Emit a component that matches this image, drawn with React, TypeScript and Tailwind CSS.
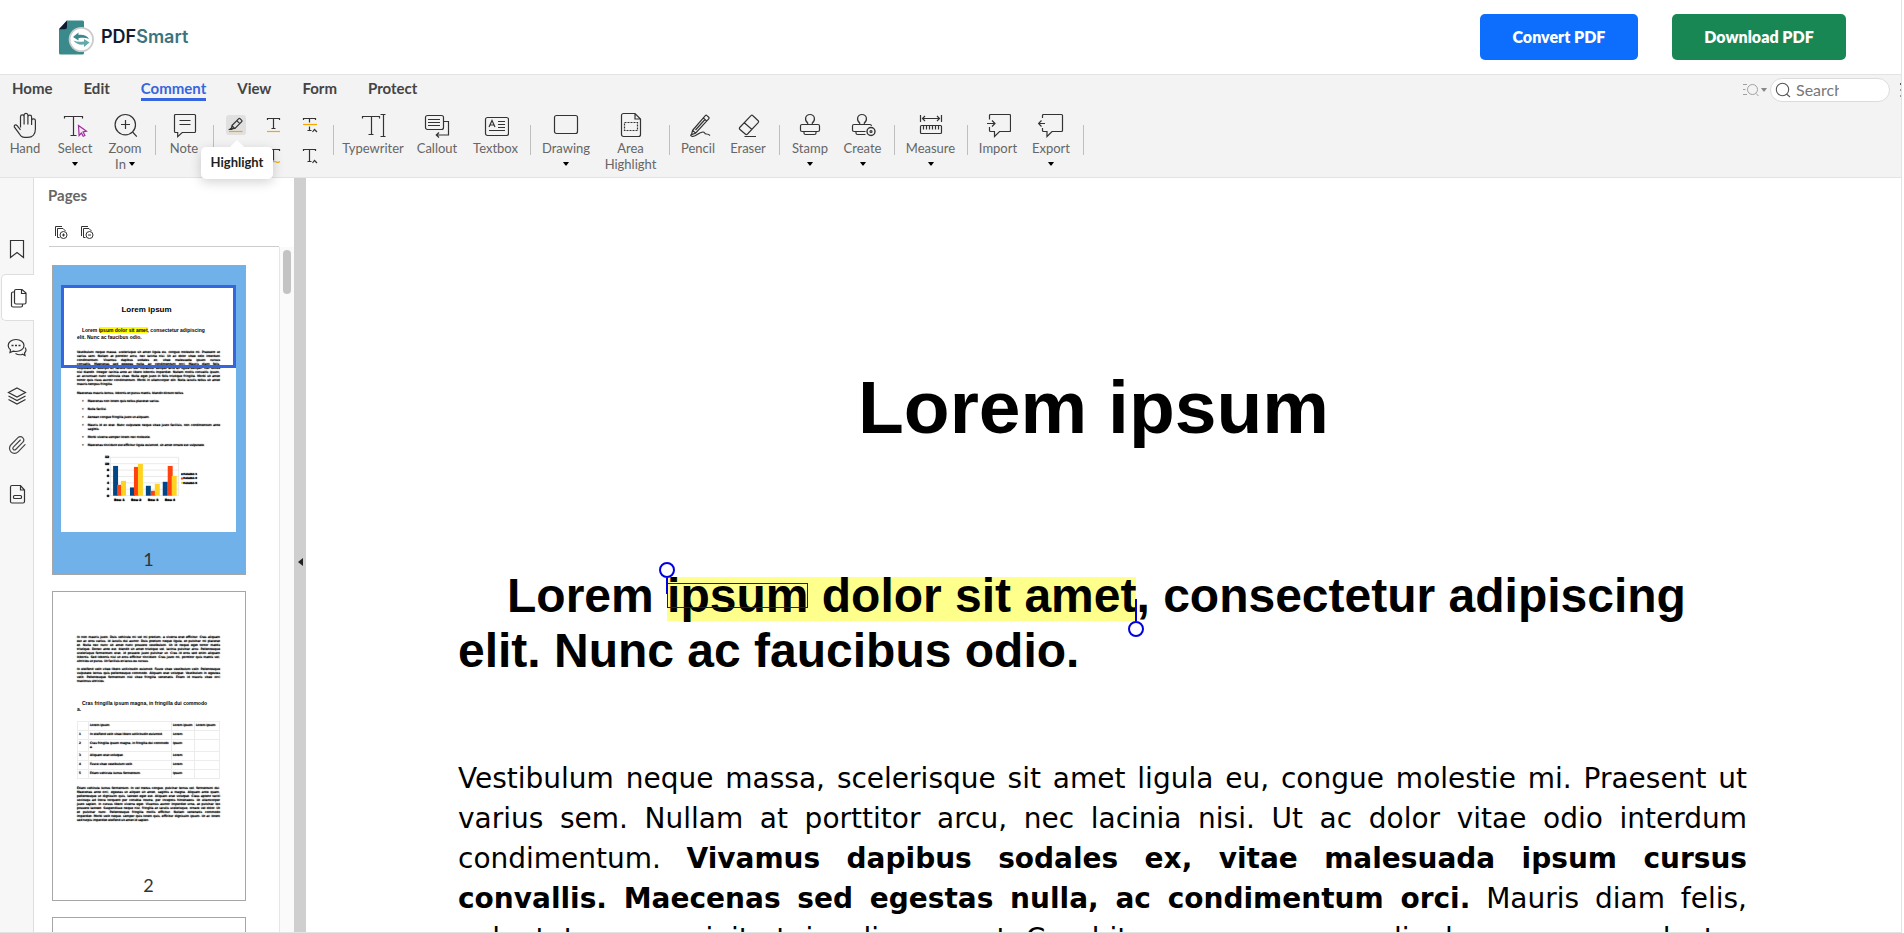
import type { ReactNode } from "react";
import { Paperclip } from "lucide-react";

const BODY = "Vestibulum neque massa, scelerisque sit amet ligula eu, congue molestie mi. Praesent ut varius sem. Nullam at porttitor arcu, nec lacinia nisi. Ut ac dolor vitae odio interdum condimentum. ";
const BODY_BOLD = "Vivamus dapibus sodales ex, vitae malesuada ipsum cursus convallis. Maecenas sed egestas nulla, ac condimentum orci.";
const BODY_END = " Mauris diam felis, vulputate ac suscipit et, iaculis non est. Curabitur semper arcu ac ligula semper, nec luctus nisl blandit. Integer lacinia ante ac libero lobortis imperdiet.";

const THUMB_BODY = [
  "Vestibulum neque massa, scelerisque sit amet ligula eu, congue molestie mi. Praesent ut",
  "varius sem. Nullam at porttitor arcu, nec lacinia nisi. Ut ac dolor vitae odio interdum",
  "condimentum. Vivamus dapibus sodales ex, vitae malesuada ipsum cursus",
  "convallis. Maecenas sed egestas nulla, ac condimentum orci. Mauris diam felis,",
  "vulputate ac suscipit et, iaculis non est. Curabitur semper arcu ac ligula semper, nec luctus",
  "nisl blandit. Integer lacinia ante ac libero lobortis imperdiet. Nullam mollis convallis ipsum,",
  "ac accumsan nunc vehicula vitae. Nulla eget justo in felis tristique fringilla. Morbi sit amet",
  "tortor quis risus auctor condimentum. Morbi in ullamcorper elit. Nulla iaculis tellus sit amet",
  "mauris tempus fringilla.",
];

const BULLETS = [
  ["Maecenas non lorem quis tellus placerat varius."],
  ["Nulla facilisi."],
  ["Aenean congue fringilla justo ut aliquam."],
  ["Mauris id ex erat. Nunc vulputate neque vitae justo facilisis, non condimentum ante", "sagittis."],
  ["Morbi viverra semper lorem nec molestie."],
  ["Maecenas tincidunt est efficitur ligula euismod, sit amet ornare est vulputate."],
];

const PAGE2_A = [
  "In non mauris justo. Duis vehicula mi vel mi pretium, a viverra erat efficitur. Cras aliquam",
  "est ac eros varius, id iaculis dui auctor. Duis pretium neque ligula, et pulvinar mi placerat",
  "et. Nulla nec nunc sit amet nunc posuere vestibulum. Ut id neque eget tortor mattis",
  "tristique. Donec ante est, blandit sit amet tristique vel, lacinia pulvinar arcu. Pellentesque",
  "scelerisque fermentum erat, id posuere justo pulvinar ut. Cras id eros sed enim aliquam",
  "lobortis. Sed lobortis nisl ut eros efficitur tincidunt. Cras justo mi, porttitor quis mattis vel,",
  "ultricies ut purus. Ut facilisis et lacus eu cursus.",
];
const PAGE2_B = [
  "In eleifend velit vitae libero sollicitudin euismod. Fusce vitae vestibulum velit. Pellentesque",
  "vulputate lectus quis pellentesque commodo. Aliquam erat volutpat. Vestibulum in egestas",
  "velit. Pellentesque fermentum nisl vitae fringilla venenatis. Etiam id mauris vitae orci",
  "maximus ultricies.",
];
const PAGE2_C = [
  "Etiam vehicula luctus fermentum. In vel metus congue, pulvinar lectus vel, fermentum dui.",
  "Maecenas ante orci, egestas ut aliquet sit amet, sagittis a magna. Aliquam ante quam,",
  "pellentesque ut dignissim quis, laoreet eget est. Aliquam erat volutpat. Class aptent taciti",
  "sociosqu ad litora torquent per conubia nostra, per inceptos himenaeos. Ut ullamcorper",
  "justo sapien, in cursus libero viverra eget. Vivamus auctor imperdiet urna, at pulvinar leo",
  "posuere laoreet. Suspendisse neque nisl, fringilla at iaculis scelerisque, ornare vel dolor. Ut",
  "et pulvinar nunc. Pellentesque fringilla mollis efficitur. Nullam venenatis commodo",
  "imperdiet. Morbi velit neque, semper quis lorem quis, efficitur dignissim ipsum. Ut ac lorem",
  "sed turpis imperdiet eleifend sit amet id sapien.",
];
const TABLE_ROWS = [
  ["", "Lorem ipsum", "Lorem ipsum", "Lorem ipsum"],
  ["1", "In eleifend velit vitae libero sollicitudin euismod.", "Lorem", ""],
  ["2", "Cras fringilla ipsum magna, in fringilla dui commodo a.", "Ipsum", ""],
  ["3", "Aliquam erat volutpat.", "Lorem", ""],
  ["4", "Fusce vitae vestibulum velit.", "Lorem", ""],
  ["5", "Etiam vehicula luctus fermentum.", "Ipsum", ""],
];

function Icon({ children, size = 26 }: { children: ReactNode; size?: number }) {
  return (
    <svg width={size} height={size} viewBox={`0 0 ${size} ${size}`} fill="none" stroke="#333" strokeWidth="1.2" aria-hidden="true" className="shrink-0">
      {children}
    </svg>
  );
}

function Caret({ className = "fill-black" }: { className?: string }) {
  return (
    <svg width="6" height="4" viewBox="0 0 6 4" aria-hidden="true" className={className}>
      <path d="M0 0h6L3.5 3.4h-1z" />
    </svg>
  );
}

const icons = {
  hand: (
    <Icon>
      <path d="M8.5 15.5V4.7a1.8 1.8 0 0 1 3.6 0V12.5M12.1 5V3.2a1.9 1.9 0 0 1 3.8 0v9.3M15.9 5a1.8 1.8 0 0 1 3.7 0v8M19.6 8.8a1.9 1.9 0 0 1 3.8 0V17c0 5-2.8 8.4-7.6 8.4h-3.2c-2.4 0-4-1.2-5.2-3.6L2.3 14.9c-.4-1.5 1.3-3 2.8-1.3l3.4 4.2" />
    </Icon>
  ),
  select: (
    <Icon>
      <path d="M2.5 6.5v-2h18v2M11.5 4.5v19M8.5 23.5h6" />
      <path d="M16.5 13.5l8 5.7-3.4.8 1.8 3.4-1.7.9-1.8-3.3-2.3 2.5z" fill="#fbe6fb" stroke="#9c2f9c" />
    </Icon>
  ),
  zoom: (
    <Icon>
      <circle cx="13.3" cy="12.7" r="10.2" />
      <path d="M13.5 8v9M9 12.5h9M20.6 20l4.2 4.6" />
    </Icon>
  ),
  note: (
    <Icon>
      <path d="M4.5 2.5h19a1 1 0 0 1 1 1v16a1 1 0 0 1-1 1H11.2L6.7 24.6v-4.1H4.5a1 1 0 0 1-1-1v-16a1 1 0 0 1 1-1zM8.5 8.5h11M8.5 12.5h11" />
    </Icon>
  ),
  typewriter: (
    <Icon>
      <path d="M2.5 6.5v-2h17v2M11.5 4.5v18M8.5 22.5h5M20.5 2.5h5M20.5 24.5h5M23.5 2.5v22" />
    </Icon>
  ),
  callout: (
    <Icon>
      <rect x="1.5" y="3.5" width="18" height="14" rx="2" />
      <path d="M4 7.5h12M4 10.5h12M4 13.5h12M19.5 9.5h5v13.5H12.5M15 20.5L12.3 23l2.7 2.5" />
    </Icon>
  ),
  textbox: (
    <Icon>
      <rect x="2.5" y="5.5" width="23" height="18" rx="2" />
      <path d="M6 15l3-6.500 3 6.500M7 13h4M15 9.500h7M15 12.500h7M15 15.500h7M6 18.500h16" />
    </Icon>
  ),
  drawing: (
    <Icon>
      <rect x="1.5" y="3.5" width="23" height="18" rx="2" />
    </Icon>
  ),
  area: (
    <Icon>
      <path d="M5.5 1.5H17L22.5 7v15.500a2 2 0 0 1-2 2h-15a2 2 0 0 1-2-2v-19a2 2 0 0 1 2-2zM17 1.500V7h5.500" />
      <rect x="6.500" y="10.500" width="13" height="8" strokeDasharray="2 1" />
    </Icon>
  ),
  pencil: (
    <Icon>
      <path d="M7.500 18.500L20.300 3.600c.5-.5 1.200-.5 1.700 0l1.700 1.600c.5.500.5 1.100 0 1.600L10.500 21.200l-4 1.300zM18.300 6l3.300 3M7.800 18.300l2.700 2.800M10.500 18L20 7.500" />
      <path d="M6 22.500c-1.200 2 2.500 2.500 5 .8 3-2 4.700-3.300 7-3.300 2 0 1.300 2 3 2 1.500 0 2.300-.2 4 1.500" />
    </Icon>
  ),
  eraser: (
    <Icon>
      <path d="M4.700 15.500L16 3.700c.6-.6 1.300-.6 1.900 0l5.300 5c.6.600.6 1.300 0 2L12.500 22c-.8.800-1.500.8-2.300 0l-5.500-4.700c-.5-.6-.5-1.200 0-1.800zM9.300 10.800l7.700 6.700M9.500 24.500H21" />
    </Icon>
  ),
  stamp: (
    <Icon>
      <path d="M10.700 12.500V11C7 8 8.300 2.500 13 2.500s6 5.500 2.300 8.500v1.500" />
      <rect x="3.500" y="12.500" width="19" height="7" rx="1.500" />
      <path d="M7 19.500v1.500a1.500 1.500 0 0 0 1.500 1.500h9a1.500 1.500 0 0 0 1.500-1.500v-1.500" />
    </Icon>
  ),
  create: (
    <Icon>
      <path d="M9.700 12.500V11C6 8 7.300 2.500 12 2.500s6 5.500 2.300 8.500v1.500M15.500 19.500H4a1.500 1.500 0 0 1-1.500-1.500v-4A1.500 1.500 0 0 1 4 12.500h16c.8 0 1.300.5 1.500 1.500M6 19.500v1.500a1.500 1.500 0 0 0 1.500 1.500h8" />
      <circle cx="21" cy="19.500" r="4" strokeWidth="1.400" />
      <circle cx="21" cy="19.500" r="1" />
    </Icon>
  ),
  measure: (
    <Icon>
      <path d="M2.500 3v7M23.500 3v7M4.500 6.500h17M7 4L4.500 6.500 7 9M19 4l2.500 2.500L19 9" />
      <rect x="2.500" y="13.500" width="21" height="8" rx="1" />
      <path d="M5.500 13.500v4M8.500 13.500v4M11.500 13.500v4M14.500 13.500v4M17.500 13.500v4M20.500 13.500v4" />
    </Icon>
  ),
  import: (
    <Icon>
      <path d="M4.500 7.500v-4a1 1 0 0 1 1-1h19a1 1 0 0 1 1 1v15a1 1 0 0 1-1 1H14.500l-5 5v-5h-4a1 1 0 0 1-1-1V15M2 11.500h7.500M7 8.500l3 3-3 3" />
    </Icon>
  ),
  export: (
    <Icon>
      <path d="M4.500 6V3.500a1 1 0 0 1 1-1h18a1 1 0 0 1 1 1v15a1 1 0 0 1-1 1H14l-5 5v-5H5.500a1 1 0 0 1-1-1V16M.8 11.500H7M3.500 8.500l-3 3 3 3" />
    </Icon>
  ),
};

type ToolDef = { icon: ReactNode; label: string; second?: string; caret?: boolean; width: string } | null;

const TOOLS_LEFT: ToolDef[] = [
  { icon: icons.hand, label: "Hand", width: "w-[50px]" },
  { icon: icons.select, label: "Select", caret: true, width: "w-[50px]" },
  { icon: icons.zoom, label: "Zoom", second: "In", caret: true, width: "w-[50px]" },
  null,
  { icon: icons.note, label: "Note", width: "w-[48px]" },
  null,
];

const TOOLS_RIGHT: ToolDef[] = [
  null,
  { icon: icons.typewriter, label: "Typewriter", width: "w-[70px]" },
  { icon: icons.callout, label: "Callout", width: "w-[58px]" },
  { icon: icons.textbox, label: "Textbox", width: "w-[59px]" },
  null,
  { icon: icons.drawing, label: "Drawing", caret: true, width: "w-[62px]" },
  { icon: icons.area, label: "Area", second: "Highlight", width: "w-[67px]" },
  null,
  { icon: icons.pencil, label: "Pencil", width: "w-[48px]" },
  { icon: icons.eraser, label: "Eraser", width: "w-[52px]" },
  null,
  { icon: icons.stamp, label: "Stamp", caret: true, width: "w-[52px]" },
  { icon: icons.create, label: "Create", caret: true, width: "w-[53px]" },
  null,
  { icon: icons.measure, label: "Measure", caret: true, width: "w-[63px]" },
  null,
  { icon: icons.import, label: "Import", width: "w-[52px]" },
  { icon: icons.export, label: "Export", caret: true, width: "w-[54px]" },
  null,
];

function Tool({ tool }: { tool: ToolDef }) {
  if (!tool) {
    return (
      <div className="flex w-[10px] shrink-0 justify-center pt-[13px]">
        <div className="h-[30px] w-px bg-[#bfbfbf]" />
      </div>
    );
  }
  return (
    <button type="button" className={`flex shrink-0 flex-col items-center text-[13px] leading-4 text-[#666] ${tool.width}`}>
      {tool.icon}
      <span className="mt-[2px] whitespace-nowrap">{tool.label}</span>
      <span className="flex h-4 items-center gap-[3px] whitespace-nowrap">
        {tool.second}
        {tool.caret && <Caret />}
      </span>
    </button>
  );
}

function TextTool({ label, active, children }: { label: string; active?: boolean; children: ReactNode }) {
  return (
    <button type="button" aria-label={label} className={`flex h-5 w-5 items-center justify-center rounded-[3px] ${active ? "bg-[#e0e0e0]" : ""}`}>
      <Icon size={16}>{children}</Icon>
    </button>
  );
}

function TextTools() {
  return (
    <div className="relative mt-[3px] grid w-[110px] shrink-0 grid-cols-3 content-start justify-items-center gap-y-[11px]">
      <TextTool label="Highlight" active>
        <path d="M4 8.500L10.800 1.700c.4-.4.800-.4 1.200 0l1.700 1.700c.4.400.4.800 0 1.200L7 11.400l-2.600.2-.8-.8zM9 3.800l2.800 2.800M4.200 9l2.500 2.500M3.700 10.800L1.500 12.500h3" />
        <path d="M1 14.500h13.500" stroke="#f5a800" />
      </TextTool>
      <TextTool label="Underline">
        <path d="M2.500 3V1.500h12V3M8.500 1.500v10M6.500 11.500h4" />
        <path d="M2 14.500h13" stroke="#f5a800" />
      </TextTool>
      <TextTool label="Replace">
        <path d="M1.500 3V1.500h12V3M7.500 1.500v4M7.500 9.500v4M5.500 13.500h4M10.500 15l2-2.500 2.500 2.500" />
        <path d="M1 7.500h14" stroke="#f5a800" />
      </TextTool>
      <TextTool label="Strikeout">
        <path d="M2.500 3V1.500h12V3M8.500 1.500v12M6.500 13.500h4" />
      </TextTool>
      <TextTool label="Squiggly">
        <path d="M2.500 3V1.500h12V3M8.500 1.500v11" />
        <path d="M2 14.500c2-2 2.500 0 4 0s2-1 3.500-1 2 1 3 1 1-1 2.500-.5" stroke="#f5a800" />
      </TextTool>
      <TextTool label="Insert text">
        <path d="M1.500 3V1.500h12V3M7.500 1.500v12M5.500 13.500h4M10.500 15l2-2.500 2.500 2.500" />
      </TextTool>
      <div role="tooltip" className="absolute -left-[17px] top-[32px] z-20 flex h-8 w-[72px] items-center justify-center rounded-[5px] bg-white text-[13px] font-bold text-[#222] shadow-[0_3px_12px_rgba(0,0,0,0.18)]">
        <span className="absolute -top-[5px] left-[31px] h-[10px] w-[10px] rotate-45 bg-white" />
        <span className="relative">Highlight</span>
      </div>
    </div>
  );
}

function Logo() {
  return (
    <a href="#" className="flex items-center gap-[7px] font-['Inter',sans-serif] text-[18px] font-semibold leading-6">
      <svg width="35" height="35" viewBox="0 0 35 35" aria-hidden="true">
        <path d="M8 .5h15.500a1.500 1.500 0 0 1 1.500 1.500v31a1.500 1.500 0 0 1-1.500 1.500h-22A1.500 1.500 0 0 1 0 33V9z" fill="#3a8a8c" />
        <path d="M0 9.200L8 .5V7a2.200 2.200 0 0 1-2.200 2.200z" fill="#101a30" />
        <circle cx="22.300" cy="19.500" r="11.700" fill="#fff" stroke="#cbcbcb" strokeWidth="1.800" />
        <path d="M14 17l5.500-4.500V15c4.500-.6 8.500.7 10.500 4-3-1.300-6.500-1.600-10.500-.8v2.300z" fill="#3a8a8c" />
        <path d="M30.500 22.500L25 27v-2.400c-4.500.6-8.500-.7-10.500-4 3 1.300 6.500 1.600 10.500.8V19z" fill="#62a9a9" />
      </svg>
      <span className="text-[#101a30]">PDF<span className="text-[#3c747d]">Smart</span></span>
    </a>
  );
}

function TopBar() {
  return (
    <header className="flex h-[74px] shrink-0 items-center justify-between pl-[59px] pr-[55px]">
      <Logo />
      <div className="flex gap-[34px] text-[16px] font-extrabold text-white">
        <button type="button" className="h-[46px] w-[158px] rounded-[5px] bg-[#0d6efd]">Convert PDF</button>
        <button type="button" className="h-[46px] w-[174px] rounded-[5px] bg-[#198754]">Download PDF</button>
      </div>
    </header>
  );
}

function Ribbon() {
  const tabs = ["Home", "Edit", "Comment", "View", "Form", "Protect"];
  return (
    <div className="shrink-0 border-y border-[#e3e3e3] bg-[#f3f3f3]">
      <div className="flex h-[37px] items-start justify-between">
        <nav className="flex gap-[31px] pl-3 pt-[3px] text-[15px] font-bold leading-5 text-[#444]">
          {tabs.map((t) => (
            <a key={t} href="#" className={t === "Comment" ? "border-b-[3px] border-[#3566e0] text-[#3566e0]" : ""}>{t}</a>
          ))}
        </nav>
        <div className="flex items-center pt-[3px]">
          <button type="button" aria-label="Search options" className="flex items-center gap-[2px]">
            <svg width="16" height="14" viewBox="0 0 16 14" fill="none" stroke="#a0a0a0" aria-hidden="true">
              <path d="M0 1.500h4M0 6.500h2.500M0 11.500h4M13 10.500l2.500 2.500" />
              <circle cx="9.500" cy="6.500" r="5" />
            </svg>
            <Caret className="fill-[#888]" />
          </button>
          <label className="ml-[3px] flex h-6 w-[120px] items-center rounded-full border border-[#dcdcdc] bg-white pl-1">
            <svg width="16" height="16" viewBox="0 0 16 16" fill="none" stroke="#555" strokeWidth="1.100" aria-hidden="true">
              <circle cx="7.500" cy="7.500" r="6.200" />
              <path d="M11.500 12l3.500 3" />
            </svg>
            <input aria-label="Search" placeholder="Search" className="ml-[5px] w-[43px] bg-transparent text-[16px] leading-5 outline-none placeholder:text-[#777]" />
          </label>
          <button type="button" aria-label="More" className="ml-[10px] flex w-px flex-col gap-1">
            <span className="h-[2px] bg-[#555]" />
            <span className="h-[2px] bg-[#999]" />
            <span className="h-[2px] bg-[#999]" />
          </button>
        </div>
      </div>
      <div className="flex h-[65px]">
        {TOOLS_LEFT.map((t, i) => <Tool key={i} tool={t} />)}
        <TextTools />
        {TOOLS_RIGHT.map((t, i) => <Tool key={i} tool={t} />)}
      </div>
    </div>
  );
}

const RAIL: { label: string; art: ReactNode }[] = [
  { label: "Bookmarks", art: <path d="M3.500 1.500h13v17l-6.500-5-6.500 5z" /> },
  { label: "Pages", art: <path d="M8 1.500h6L18 5v9.500a1.500 1.500 0 0 1-1.500 1.500H8a1.500 1.500 0 0 1-1.500-1.500V3A1.500 1.500 0 0 1 8 1.500zM13.500 1.500v4H18M6.500 4H5a1.500 1.500 0 0 0-1.500 1.500v12A1.500 1.500 0 0 0 5 19h8a1.500 1.500 0 0 0 1.500-1.500V16" /> },
  { label: "Comments", art: <><path d="M9 2.500c4.500 0 8 2.500 8 6s-3.500 6-8 6c-1 0-2-.1-2.800-.4L3 15.500l.5-2.700C2 11.700 1.200 10.200 1.200 8.500c0-3.500 3.300-6 7.800-6zM8.500 16.500c2.500 1.500 5 1.500 7 .7l2.500 1.300-.5-2.500c1.700-1.700 1.700-4 .5-5.500" /><path d="M4.500 8.500h2M8 8.500h2M11.500 8.500h2" strokeWidth="1.500" /></> },
  { label: "Layers", art: <path d="M10 2l8.500 4.500L10 11 1.500 6.500zM1.500 10l8.500 4.500 8.500-4.500M1.500 13.500L10 18l8.500-4.500" /> },
  { label: "Attachments", art: <Paperclip size={20} strokeWidth={1.4} stroke="#444" /> },
  { label: "Signatures", art: <><path d="M5 1.500h8.500L17.500 6v11.500a1.500 1.500 0 0 1-1.500 1.500H5a1.500 1.500 0 0 1-1.500-1.500V3A1.500 1.500 0 0 1 5 1.500zM13.500 1.500V6h4" /><rect x="6.500" y="11.500" width="8" height="3" rx="1" /></> },
];

function Rail() {
  return (
    <nav className="flex w-[34px] shrink-0 flex-col gap-[2px] border-r border-[#dedede] bg-[#f7f7f7] pt-[47px]">
      {RAIL.map((r) => (
        <button
          key={r.label}
          type="button"
          aria-label={r.label}
          className={`flex h-[47px] items-center justify-center ${r.label === "Pages" ? "-mr-px ml-px rounded-l-[5px] border-y border-l border-[#dedede] bg-white" : "pl-px"}`}
        >
          <Icon size={20}>{r.art}</Icon>
        </button>
      ))}
    </nav>
  );
}

function Lines({ lines }: { lines: string[] }) {
  return (
    <>
      {lines.map((l, i) => (
        <span key={l} className={`block whitespace-nowrap ${i < lines.length - 1 ? "[text-align-last:justify]" : ""}`}>{l}</span>
      ))}
    </>
  );
}

const BARS = [
  [32, 33, "#004586"], [44, 90, "#ff420e"], [56, 78, "#ffd320"],
  [83, 98, "#004586"], [95, 36, "#ff420e"], [107, 27, "#ffd320"],
  [131, 93, "#004586"], [146, 108, "#ff420e"], [158, 87, "#ffd320"],
  [182, 81, "#004586"], [197, 33, "#ff420e"], [209, 63, "#ffd320"],
] as const;

function Chart() {
  return (
    <svg width="97" height="48" viewBox="0 0 290 145" aria-label="Column chart" className="ml-[25px] mt-2">
      {[0, 1, 2, 3, 4, 5, 6].map((i) => (
        <g key={i}>
          <path d={`M24 ${7 + i * 19.3}H230`} stroke="#ddd" strokeWidth="2" />
          <text x="20" y={10 + i * 19.3} textAnchor="end" fontSize="9" fontWeight="700">{12 - i * 2}</text>
        </g>
      ))}
      <path d="M24 7v116M230 7v116" stroke="#ddd" strokeWidth="2" />
      {BARS.map(([x, y, c]) => <rect key={x} x={x} y={y} width="15" height={123 - y} fill={c} />)}
      {["Row 1", "Row 2", "Row 3", "Row 4"].map((r, i) => (
        <text key={r} x={51 + i * 51} y="138" textAnchor="middle" fontSize="9" fontWeight="700">{r}</text>
      ))}
      {["#004586", "#ff420e", "#ffd320"].map((c, i) => (
        <g key={c}>
          <rect x="237" y={55 + i * 13} width="6" height="6" fill={c} />
          <text x="244" y={61 + i * 13} fontSize="8" fontWeight="700">{`Column ${i + 1}`}</text>
        </g>
      ))}
    </svg>
  );
}

function PageOne() {
  return (
    <div className="relative h-[247px] bg-white px-4 pt-[20px] font-['DejaVu_Sans',sans-serif] text-[3px] leading-[4px] text-black [text-shadow:0_0_1px_#000,0_0_1px_#000]">
      <p className="pr-1 text-center font-['Liberation_Sans',sans-serif] text-[8px] font-bold leading-[10px] [text-shadow:none]">Lorem ipsum</p>
      <p className="mt-[12px] whitespace-nowrap indent-[5px] font-['Liberation_Sans',sans-serif] text-[5px] font-bold leading-[7px] [text-shadow:none]">
        Lorem <span className="bg-[#ffff00]">ipsum dolor sit amet</span>, consectetur adipiscing
      </p>
      <p className="font-['Liberation_Sans',sans-serif] text-[5px] font-bold leading-[7px] [text-shadow:none]">elit. Nunc ac faucibus odio.</p>
      <p className="mt-[9px]"><Lines lines={THUMB_BODY} /></p>
      <p className="mt-[5px]">Maecenas mauris lectus, lobortis et purus mattis, blandit dictum tellus.</p>
      <ul className="mt-1 flex flex-col gap-1">
        {BULLETS.map((b) => (
          <li key={b[0]} className="flex gap-1 pl-[5px]">
            <span>•</span>
            <span className="flex-1"><Lines lines={b} /></span>
          </li>
        ))}
      </ul>
      <Chart />
      <div className="absolute inset-x-0 top-0 h-[83px] border-[3px] border-[#3566e0]" />
    </div>
  );
}

function PageTwo() {
  return (
    <div className="h-[247px] bg-white px-4 pt-[24px] font-['DejaVu_Sans',sans-serif] text-[3px] leading-[4px] text-black [text-shadow:0_0_1px_#000,0_0_1px_#000]">
      <p><Lines lines={PAGE2_A} /></p>
      <p className="mt-1"><Lines lines={PAGE2_B} /></p>
      <p className="mt-[17px] whitespace-nowrap indent-[5px] font-['Liberation_Sans',sans-serif] text-[5px] font-bold leading-[6px] [text-shadow:none]">Cras fringilla ipsum magna, in fringilla dui commodo</p>
      <p className="font-['Liberation_Sans',sans-serif] text-[5px] font-bold leading-[6px] [text-shadow:none]">a.</p>
      <table className="mt-[9px] w-full table-fixed border-collapse text-left">
        <colgroup>
          <col className="w-[11px]" />
          <col />
          <col className="w-[23px]" />
          <col className="w-[25px]" />
        </colgroup>
        <tbody>
          {TABLE_ROWS.map((row, i) => (
            <tr key={i} className={i === 2 ? "h-[12px] align-top" : "h-[9px] align-top"}>
              {row.map((c, j) => <td key={j} className="border border-[#ececec] p-px">{c}</td>)}
            </tr>
          ))}
        </tbody>
      </table>
      <p className="mt-[7px]"><Lines lines={PAGE2_C} /></p>
    </div>
  );
}

function Thumb({ label, selected, children }: { label: string; selected?: boolean; children?: ReactNode }) {
  return (
    <li className={`flex h-[310px] w-[194px] shrink-0 flex-col border border-[#a6a6a6] pl-2 pr-[9px] pt-[19px] ${selected ? "bg-[#6fb1e8]" : "bg-white"}`}>
      {children}
      <span className="mt-[15px] text-center text-[18px] leading-6 text-[#333]">{label}</span>
    </li>
  );
}

function PagesPanel() {
  return (
    <aside className="flex w-[260px] shrink-0 flex-col bg-white">
      <h2 className="pl-[14px] pt-[7px] text-[15px] font-bold leading-5 text-[#666]">Pages</h2>
      <div className="ml-[15px] mr-[15px] flex h-[42px] items-end gap-3 border-b border-[#ccc] pb-[7px] pl-[5px]">
        {["Insert pages", "Delete pages"].map((label, i) => (
          <button key={label} type="button" aria-label={label}>
            <Icon size={14}>
              <path d="M1.500 11V1.500H8M3.500 12.500V3.500H9L11.500 6M3.500 12.500H5.500" strokeWidth="1" />
              <circle cx="9.500" cy="10" r="3.500" strokeWidth="1" />
              <path d={i === 0 ? "M8 10h3M9.500 8.500v3" : "M8 10h3"} strokeWidth="1" />
            </Icon>
          </button>
        ))}
      </div>
      <div className="flex min-h-0 flex-1">
        <ul className="flex min-w-0 flex-1 flex-col gap-4 overflow-hidden pl-[18px] pt-[18px]">
          <Thumb label="1" selected><PageOne /></Thumb>
          <Thumb label="2"><PageTwo /></Thumb>
          <Thumb label="3"><div className="h-[247px]" /></Thumb>
        </ul>
        <div className="w-[15px] border-l border-[#e6e6e6] bg-[#fafafa] pl-[3px] pt-[3px]">
          <div className="h-11 w-2 rounded-full bg-[#c3c3c3]" />
        </div>
      </div>
    </aside>
  );
}

function Document() {
  return (
    <main className="min-w-0 flex-1 overflow-hidden bg-white pl-[152px] pr-[154px] text-black">
      <h1 className="mt-[185px] pr-[18px] text-center font-['Liberation_Sans',sans-serif] text-[75px] font-bold leading-[88px]">Lorem ipsum</h1>
      <h2 className="relative z-0 mt-[117px] whitespace-nowrap indent-[49px] font-['Liberation_Sans',sans-serif] text-[48px] font-bold leading-[55px]">
        Lorem{" "}
        <span className="relative inline-block indent-0">
          <span className="absolute inset-x-0 bottom-[2px] top-[9px] -z-10 bg-[#ffff8c]" />
          <span className="relative">
            ipsum
            <span className="absolute inset-x-0 bottom-[14px] top-[14px] border border-[#1a1a70]" />
          </span>{" "}
          dolor sit amet
          <span className="absolute -left-2 top-[-6px] flex flex-col items-center">
            <span className="h-4 w-4 rounded-full border-2 border-[#0000e0] bg-white" />
            <span className="h-4 w-[2px] bg-[#0000e0]" />
          </span>
          <span className="absolute -right-2 top-[31px] flex flex-col items-center">
            <span className="h-[22px] w-[2px] bg-[#0000e0]" />
            <span className="h-4 w-4 rounded-full border-2 border-[#0000e0] bg-white" />
          </span>
        </span>
        , consectetur adipiscing
        <span className="block indent-0">elit. Nunc ac faucibus odio.</span>
      </h2>
      <p className="mt-[81px] text-justify font-['DejaVu_Sans',sans-serif] text-[28px] leading-[40px]">
        {BODY}
        <strong>{BODY_BOLD}</strong>
        {BODY_END}
      </p>
    </main>
  );
}

export default function App() {
  return (
    <div className="h-screen overflow-hidden bg-white pr-[2px] font-['Lato',sans-serif]">
      <div className="flex h-full flex-col border-b border-r border-[#e3e3e3]">
        <TopBar />
        <Ribbon />
        <div className="flex min-h-0 flex-1">
          <Rail />
          <PagesPanel />
          <button type="button" aria-label="Collapse panel" className="flex w-3 shrink-0 items-center justify-center bg-[#cfcfcf] pt-[14px]">
            <svg width="5" height="8" viewBox="0 0 5 8" aria-hidden="true"><path d="M5 0v8L0 4z" fill="#222" /></svg>
          </button>
          <Document />
        </div>
      </div>
    </div>
  );
}
